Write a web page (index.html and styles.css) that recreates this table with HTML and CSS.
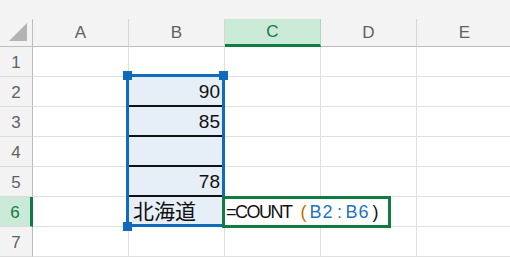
FILE: index.html
```html
<!DOCTYPE html>
<html lang="ja">
<head>
	<meta charset="UTF-8">
	<title>COUNT</title>
	<link rel="stylesheet" href="styles.css">
</head>
<body>
	<div class="topbar"></div>
	<div class="sheet">
		<div class="grid">
			<!-- 列見出し -->
			<div class="hd corner">
				<svg width="18" height="18" viewBox="0 0 18 18"><polygon points="18,0 18,18 0,18" fill="#b3b3b3"/></svg>
			</div>
			<div class="hd col">A</div>
			<div class="hd col">B</div>
			<div class="hd col on">C</div>
			<div class="hd col">D</div>
			<div class="hd col">E</div>

			<div class="hd row">1</div>
			<div class="c"></div><div class="c"></div><div class="c"></div><div class="c"></div><div class="c"></div>

			<div class="hd row">2</div>
			<div class="c"></div><div class="c sel num line">90</div><div class="c"></div><div class="c"></div><div class="c"></div>

			<div class="hd row">3</div>
			<div class="c"></div><div class="c sel num line">85</div><div class="c"></div><div class="c"></div><div class="c"></div>

			<div class="hd row">4</div>
			<div class="c"></div><div class="c sel num line"></div><div class="c"></div><div class="c"></div><div class="c"></div>

			<div class="hd row">5</div>
			<div class="c"></div><div class="c sel num line">78</div><div class="c"></div><div class="c"></div><div class="c"></div>

			<div class="hd row on">6</div>
			<div class="c"></div><div class="c sel txt">北海道</div><div class="c"></div><div class="c"></div><div class="c"></div>

			<div class="hd row">7</div>
			<div class="c"></div><div class="c"></div><div class="c"></div><div class="c"></div><div class="c"></div>
		</div>

		<!-- 参照範囲 B2:B6 -->
		<div class="range"></div>
		<span class="handle h-tl"></span>
		<span class="handle h-tr"></span>
		<span class="handle h-bl"></span>

		<!-- 編集中のセル C6 -->
		<div class="editor"><span class="fn">=COUNT</span><span class="ch p1">(</span><span class="ch ref">B</span><span class="ch ref">2</span><span class="ch ref">:</span><span class="ch ref">B</span><span class="ch ref">6</span><span class="ch">)</span></div>
	</div>
</body>
</html>
```
FILE: styles.css
```css
*{
	margin: 0;
	padding: 0;
	box-sizing: border-box;
}
body{
	width: 510px;
	height: 257px;
	overflow: hidden;
	background: #fff;
	font-family: "Liberation Sans", "Noto Sans CJK JP", sans-serif;
}
.topbar{
	height: 19px;
	background: #f3f3f3;
}
.sheet{
	position: relative;
}
.grid{
	display: grid;
	grid-template-columns: 33px repeat(5, 96px);
	grid-template-rows: 28px repeat(7, 30px);
}
.c{
	border-right: 1px solid #e0e0e0;
	border-bottom: 1px solid #e0e0e0;
	font-size: 19px;
	line-height: 30px;
	color: #111;
	white-space: nowrap;
}
.hd{
	background: #f3f3f3;
	color: #616161;
	font-size: 17px;
	text-align: center;
}
.col{
	border-right: 1px solid #d6d6d6;
	border-bottom: 1px solid #bdbdbd;
	line-height: 27px;
}
.row{
	border-right: 1px solid #bdbdbd;
	border-bottom: 1px solid #dcdcdc;
	line-height: 31px;
}
.corner{
	display: flex;
	justify-content: flex-end;
	align-items: flex-end;
	padding: 0 5px 5px 0;
	border-right: 1px solid #bdbdbd;
	border-bottom: 1px solid #bdbdbd;
}
.corner svg{
	display: block;
}
.col.on{
	background: #cbe9d7;
	color: #107c41;
	border-right-color: #a9d8bb;
	border-bottom: 3px solid #107c41;
	line-height: 25px;
}
.row.on{
	background: #cbe9d7;
	color: #107c41;
	border-right: 3px solid #107c41;
}
.sel{
	background: #e6eef8;
}
.num{
	text-align: right;
	padding-right: 4px;
}
.line{
	border-bottom: 2px solid #111;
}
.txt{
	padding-left: 4px;
	font-size: 21px;
}
.range{
	position: absolute;
	left: 126px;
	top: 55px;
	width: 99px;
	height: 153px;
	border: 3px solid #0f6cbd;
}
.handle{
	position: absolute;
	width: 9px;
	height: 9px;
	background: #0f6cbd;
}
.h-tl{
	left: 123px;
	top: 52px;
}
.h-tr{
	left: 219px;
	top: 52px;
}
.h-bl{
	left: 123px;
	top: 203px;
}
.editor{
	position: absolute;
	left: 222px;
	top: 177px;
	width: 169px;
	height: 32px;
	border: 3px solid #107c41;
	background: #fff;
	padding-left: 1px;
	font-size: 18px;
	line-height: 26px;
	color: #111;
	white-space: nowrap;
}
/* 関数名は詰めて表示 */
.fn{
	letter-spacing: -1.5px;
	margin-right: 6px;
}
/* 引数部分は一文字ずつ等幅で並べる */
.ch{
	display: inline-block;
	width: 12px;
	text-align: center;
}
.p1{
	color: #c46f00;
}
.ref{
	color: #1f74c4;
}
```
